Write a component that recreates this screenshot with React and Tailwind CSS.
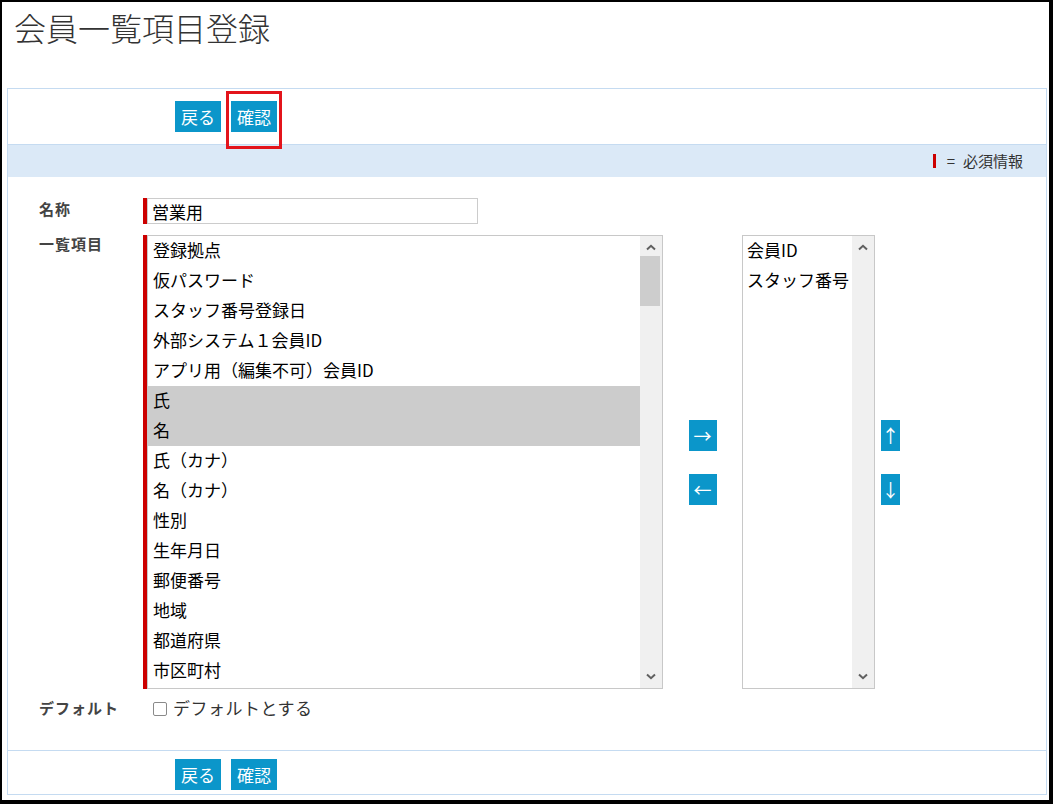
import { useState } from 'react';

const FONT = { fontFamily: '"Noto Sans CJK JP", "Noto Sans", sans-serif' };

const LEFT_ITEMS = [
  '登録拠点',
  '仮パスワード',
  'スタッフ番号登録日',
  '外部システム１会員ID',
  'アプリ用（編集不可）会員ID',
  '氏',
  '名',
  '氏（カナ）',
  '名（カナ）',
  '性別',
  '生年月日',
  '郵便番号',
  '地域',
  '都道府県',
  '市区町村',
];

const RIGHT_ITEMS = ['会員ID', 'スタッフ番号'];

function Chevron({ up }) {
  return (
    <svg width="10" height="7" viewBox="0 0 10 7" className="block">
      <path
        d={up ? 'M1 5.5 L5 1.8 L9 5.5' : 'M1 1.5 L5 5.2 L9 1.5'}
        fill="none"
        stroke="#606060"
        strokeWidth="2"
      />
    </svg>
  );
}

function Scrollbar({ thumb }) {
  return (
    <div className="w-[22px] bg-[#f0f0f0] flex flex-col shrink-0">
      <div className="h-[20px] flex items-center justify-center pt-[2px]"><Chevron up /></div>
      {thumb && <div className="h-[50px] w-[20px] bg-[#cdcdcd]" />}
      <div className="flex-1" />
      <div className="h-[20px] flex items-center justify-center pb-[4px]"><Chevron /></div>
    </div>
  );
}

function BlueButton({ children, className = '' }) {
  return (
    <button className={`bg-[#0b96ca] text-white text-[17px] leading-none h-[31px] ${className}`}>
      {children}
    </button>
  );
}

function ButtonRow() {
  return (
    <div className="flex gap-[10px] pl-[167px]">
      <BlueButton className="w-[46px]">戻る</BlueButton>
      <BlueButton className="w-[46px]">確認</BlueButton>
    </div>
  );
}

export default function App() {
  const [selected, setSelected] = useState(['氏', '名']);
  const [asDefault, setAsDefault] = useState(false);

  const toggle = (item) =>
    setSelected((s) => (s.includes(item) ? s.filter((x) => x !== item) : [...s, item]));

  return (
    <div
      className="w-[1053px] h-[804px] border-l-2 border-t-2 border-r-[4px] border-b-[4px] border-black bg-white text-black overflow-hidden"
      style={FONT}
    >
      <h1 className="pl-[12px] pt-[5px] text-[32px] leading-[40px] font-light text-[#333]">
        会員一覧項目登録
      </h1>

      <div className="mt-[41px] ml-[5px] w-[1040px] border border-[#c5dbf1]">
        {/* top actions */}
        <div className="h-[54px] pt-[12px] flex gap-[10px] pl-[167px]">
          <BlueButton className="w-[46px]">戻る</BlueButton>
          <div className="relative">
            <BlueButton className="w-[46px]">確認</BlueButton>
            <div className="absolute -top-[10px] -bottom-[6px] -left-[5px] -right-[5px] border-[3px] border-[#e3141b]" />
          </div>
        </div>

        <div className="border-t border-[#c5dbf1] mt-[1px]" />
        <div className="h-[32px] bg-[#dbe9f7] flex items-center justify-end pr-[23px] text-[15px] text-[#333]">
          <span className="w-[3px] h-[14px] bg-[#c00] mr-[11px]" />
          <span className="mr-[8px]">=</span>
          <span>必須情報</span>
        </div>

        {/* form */}
        <div className="pl-[31px] pt-[21px]">
          <div className="flex">
            <div className="w-[104px] pt-[0px] text-[15px] tracking-[1px] font-bold text-[#444]">名称</div>
            <div className="flex">
              <span className="w-[4px] h-[26px] bg-[#c00]" />
              <input
                defaultValue="営業用"
                className="w-[331px] h-[26px] border border-[#ccc] pl-[4px] text-[17px] outline-none"
              />
            </div>
          </div>

          <div className="flex mt-[11px]">
            <div className="w-[104px] -mt-[2px] text-[15px] tracking-[1px] font-bold text-[#444]">一覧項目</div>
            <div className="flex">
              <span className="w-[4px] h-[454px] bg-[#c00]" />
              <div className="w-[516px] h-[454px] border border-[#c8c8c8] flex overflow-hidden">
                <ul className="flex-1 text-[17px]">
                  {LEFT_ITEMS.map((item) => (
                    <li
                      key={item}
                      onClick={() => toggle(item)}
                      className={`h-[30px] leading-[28px] pl-[5px] ${selected.includes(item) ? 'bg-[#cccccc]' : ''}`}
                    >
                      {item}
                    </li>
                  ))}
                </ul>
                <Scrollbar thumb />
              </div>

              <div className="w-[79px] flex flex-col items-center justify-center gap-[23px]">
                <BlueButton className="w-[28px] h-[30px] text-[18px]">→</BlueButton>
                <BlueButton className="w-[28px] h-[30px] text-[18px]">←</BlueButton>
              </div>

              <div className="w-[133px] h-[454px] border border-[#c8c8c8] flex overflow-hidden">
                <ul className="flex-1 text-[17px]">
                  {RIGHT_ITEMS.map((item) => (
                    <li key={item} className="h-[30px] leading-[28px] pl-[4px]">{item}</li>
                  ))}
                </ul>
                <Scrollbar />
              </div>

              <div className="pl-[6px] flex flex-col justify-center gap-[23px]">
                <BlueButton className="w-[19px] h-[30px] text-[18px]">↑</BlueButton>
                <BlueButton className="w-[19px] h-[30px] text-[18px]">↓</BlueButton>
              </div>
            </div>
          </div>

          <div className="flex mt-[8px] h-[30px]">
            <div className="w-[104px] pt-[0px] text-[15px] tracking-[1px] font-bold text-[#444]">デフォルト</div>
            <label className="flex items-start pl-[10px] text-[17px] tracking-[0.5px] text-[#333]">
              <input
                type="checkbox"
                checked={asDefault}
                onChange={(e) => setAsDefault(e.target.checked)}
                className="appearance-none w-[14px] h-[14px] mt-[5px] border-[1.5px] border-[#8a8a8a] rounded-[2px] bg-white"
              />
              <span className="ml-[6px] leading-[22px]">デフォルトとする</span>
            </label>
          </div>
        </div>

        <div className="mt-[23px] border-t border-[#c5dbf1] h-[44px] pt-[8px]">
          <ButtonRow />
        </div>
      </div>
    </div>
  );
}
